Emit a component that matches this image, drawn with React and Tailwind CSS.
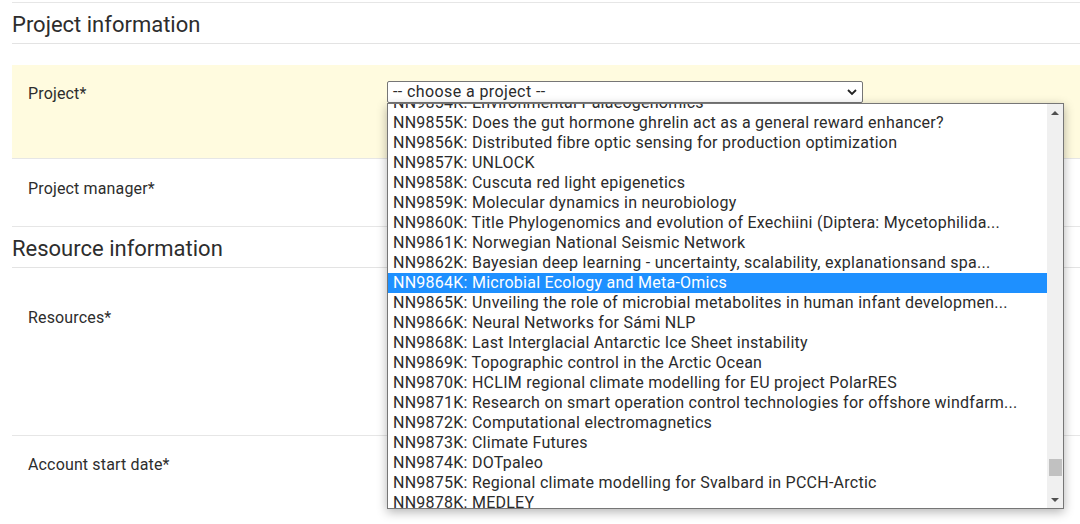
import React from "react";

const projects = [
  "NN9854K: Environmental Palaeogenomics",
  "NN9855K: Does the gut hormone ghrelin act as a general reward enhancer?",
  "NN9856K: Distributed fibre optic sensing for production optimization",
  "NN9857K: UNLOCK",
  "NN9858K: Cuscuta red light epigenetics",
  "NN9859K: Molecular dynamics in neurobiology",
  "NN9860K: Title Phylogenomics and evolution of Exechiini (Diptera: Mycetophilida...",
  "NN9861K: Norwegian National Seismic Network",
  "NN9862K: Bayesian deep learning - uncertainty, scalability, explanationsand spa...",
  "NN9864K: Microbial Ecology and Meta-Omics",
  "NN9865K: Unveiling the role of microbial metabolites in human infant developmen...",
  "NN9866K: Neural Networks for Sámi NLP",
  "NN9868K: Last Interglacial Antarctic Ice Sheet instability",
  "NN9869K: Topographic control in the Arctic Ocean",
  "NN9870K: HCLIM regional climate modelling for EU project PolarRES",
  "NN9871K: Research on smart operation control technologies for offshore windfarm...",
  "NN9872K: Computational electromagnetics",
  "NN9873K: Climate Futures",
  "NN9874K: DOTpaleo",
  "NN9875K: Regional climate modelling for Svalbard in PCCH-Arctic",
  "NN9878K: MEDLEY",
];

const selected = "NN9864K: Microbial Ecology and Meta-Omics";

function Heading({ children }) {
  return (
    <div className="h-[41px] pt-[2px] flex items-center border-b border-[#e3e3e3] text-[22px] text-[#2d2d2d]">
      {children}
    </div>
  );
}

function Row({ label, className, children }) {
  return (
    <div className={"flex border-b border-[#e6e6e6] " + className}>
      <div className="w-[375px] pl-4 pt-[1px] text-[16px] leading-6 tracking-[0.15px] text-[#2d2d2d]">{label}</div>
      <div className="flex-1">{children}</div>
    </div>
  );
}

function ProjectDropdown() {
  return (
    <div className="absolute left-0 top-[22px] w-[677px] h-[406px] bg-white border border-[#767676] shadow-[0_3px_10px_rgba(0,0,0,0.3)] flex overflow-hidden z-10">
      <div className="flex-1 overflow-hidden">
        <div className="-mt-[11px]">
          {projects.map((p) => (
            <div
              key={p}
              className={
                "h-5 leading-5 pl-[5px] text-[16px] tracking-[0.25px] whitespace-nowrap " +
                (p === selected ? "bg-[#1e90ff] text-white" : "text-[#2b2b2b]")
              }
            >
              {p}
            </div>
          ))}
        </div>
      </div>
      <div className="w-4 bg-[#f0f0f0] flex flex-col items-center justify-between">
        <svg width="16" height="16" viewBox="0 0 16 16">
          <path d="M4 11 L8 7 L12 11 Z" fill="#505050" />
        </svg>
        <div className="flex-1 w-full relative">
          <div className="absolute left-[2px] right-[1px] top-[339px] h-[17px] bg-[#c1c1c1]" />
        </div>
        <svg width="16" height="16" viewBox="0 0 16 16">
          <path d="M4 6 L12 6 L8 10 Z" fill="#505050" />
        </svg>
      </div>
    </div>
  );
}

export default function App() {
  return (
    <div
      className="bg-white w-[1080px] h-[524px] overflow-hidden pl-3"
      style={{ fontFamily: "Roboto, 'Liberation Sans', sans-serif" }}
    >
      <div className="h-[3px] border-b border-[#e6e6e6]" />
      <Heading>Project information</Heading>
      <div className="h-[21px]" />
      <Row label="Project*" className="bg-[#fffbdf] h-[94px] pt-4">
        <div className="relative w-[476px]">
          <div className="h-[22px] border border-[#767676] rounded-[2px] bg-white flex items-center justify-between pl-[5px] pr-[4px] text-[16px] tracking-[0.4px] text-[#2b2b2b]">
            <span>-- choose a project --</span>
            <svg width="12" height="12" viewBox="0 0 12 12">
              <path d="M2 4 L6 8 L10 4" fill="none" stroke="#222" strokeWidth="1.8" />
            </svg>
          </div>
          <ProjectDropdown />
        </div>
      </Row>
      <Row label="Project manager*" className="h-[68px] pt-[17px]" />
      <Heading>Resource information</Heading>
      <Row label="Resources*" className="h-[168px] pt-[37px]" />
      <Row label="Account start date*" className="h-[120px] pt-4">
        <div className="mt-[37px] pl-[170px] text-[14px] text-[#666]">
          (start date is usually the beginning of the allocation period)
        </div>
      </Row>
    </div>
  );
}
